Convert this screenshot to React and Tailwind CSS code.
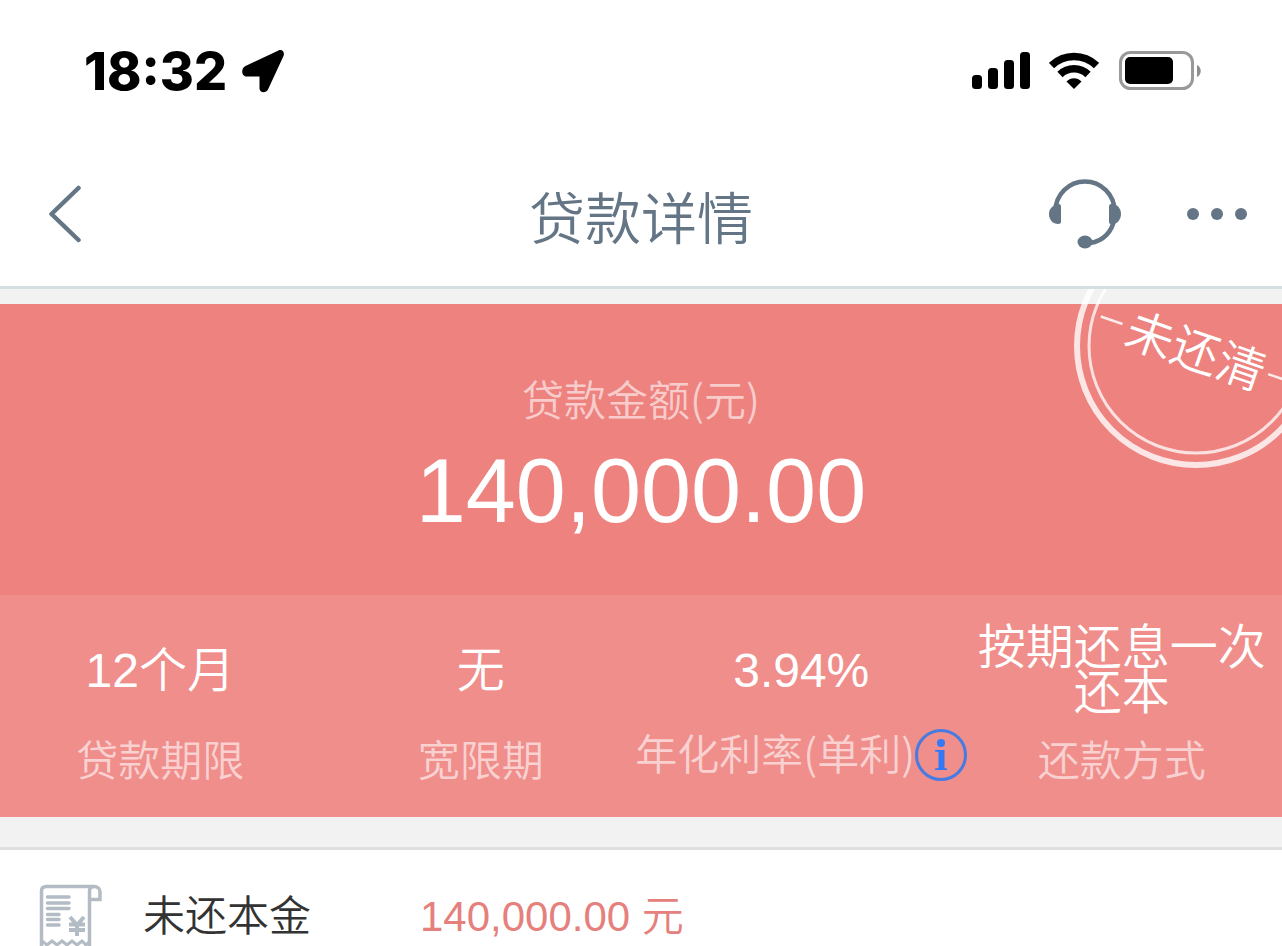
const terms = [
  { value: '12个月', label: '贷款期限' },
  { value: '无', label: '宽限期' },
  { value: '3.94%', label: '年化利率(单利)', info: true },
  { value: '按期还息一次还本', label: '还款方式' },
];

const StatusBar = () => (
  <div className="flex h-[142px] items-center justify-between pl-[84px] pr-[81px]">
    <div className="flex items-center gap-[14px] font-['Inter',sans-serif] text-[52px] font-extrabold leading-none text-black">
      <span className="pt-[2px]">18:32</span>
      <svg className="h-[44px] w-[44px]" viewBox="0 0 44 44" fill="currentColor" aria-hidden="true">
        <path d="M37.500 1.500C41 0 44 3 42.500 7L27 40.500C25 44.500 18.500 44 18.500 39.500V27.500H5.500C0.500 27.500 -0.500 19.500 4.500 17Z" />
      </svg>
    </div>
    <div className="flex items-center text-black">
      <svg className="h-[38px] w-[58px]" viewBox="0 0 58 38" fill="currentColor" aria-hidden="true">
        <rect x="0" y="23" width="10" height="14" rx="3.500" />
        <rect x="16" y="16" width="10" height="21" rx="3.500" />
        <rect x="32" y="8" width="10" height="29" rx="3.500" />
        <rect x="48" y="0" width="10" height="37" rx="3.500" />
      </svg>
      <svg className="ml-[19px] h-[38px] w-[50px]" viewBox="0 0 50 38" fill="none" aria-hidden="true">
        <path d="M2.500 13.500A32.500 32.500 0 0 1 47.500 13.500" stroke="currentColor" strokeWidth="7.500" />
        <path d="M11 22.500A20 20 0 0 1 39 22.500" stroke="currentColor" strokeWidth="7.500" />
        <path d="M17.500 29.500C21.500 25 28.500 25 32.500 29.500L25 37Z" fill="currentColor" />
      </svg>
      <svg className="ml-5 h-[40px] w-[82px]" viewBox="0 0 82 40" aria-hidden="true">
        <rect x="1.500" y="1.500" width="72" height="36" rx="10" fill="none" stroke="#999" strokeWidth="3" />
        <rect x="6" y="6" width="48" height="27" rx="5" fill="currentColor" />
        <path d="M78 14C83 16 83 24 78 26Z" fill="#8e8e8e" />
      </svg>
    </div>
  </div>
);

const NavBar = () => (
  <header className="grid h-[147px] grid-cols-[1fr_auto_1fr] items-center border-b-[3px] border-[#d5dfe1] px-[35px] text-[#647686]">
    <button type="button" aria-label="返回" className="ml-[13px] justify-self-start">
      <svg className="h-[58px] w-[34px]" viewBox="0 0 34 58" fill="none" stroke="currentColor" strokeWidth="4.500" strokeLinecap="round" strokeLinejoin="round">
        <path d="M30.500 3L3.500 29L30.500 55" />
      </svg>
    </button>
    <h1 className="pt-3 text-[56px] leading-[64px]">贷款详情</h1>
    <div className="flex items-center justify-self-end">
      <button type="button" aria-label="客服">
        <svg className="h-[72px] w-[74px]" viewBox="0 0 74 72" fill="none">
          <path d="M7.500 33A29.500 29.500 0 0 1 66.500 33" stroke="currentColor" strokeWidth="4.500" />
          <path d="M66 42C64 53 56 63 42 65" stroke="currentColor" strokeWidth="4.500" />
          <path d="M13 29C13 26 12 26 9 26C4 28 1 31 1 36C1 42 5 46 10 46C12 46 13 45 13 44Z" fill="currentColor" />
          <path d="M61 29C61 26 62 26 65 26C70 27 73 31 73 36C73 41 70 45 66 46H63C61.500 46 61 45 61 44Z" fill="currentColor" />
          <ellipse cx="37" cy="64" rx="7.500" ry="6.500" fill="currentColor" />
        </svg>
      </button>
      <button type="button" aria-label="更多" className="ml-[65px] flex gap-3">
        <span className="h-3 w-3 rounded-full bg-current" />
        <span className="h-3 w-3 rounded-full bg-current" />
        <span className="h-3 w-3 rounded-full bg-current" />
      </button>
    </div>
  </header>
);

const Stamp = () => (
  <svg className="absolute right-0 top-0 h-[182px] w-[210px]" viewBox="0 0 210 182" fill="none" role="img" aria-label="未还清">
    <circle cx="124" cy="57" r="119" stroke="#fff" strokeOpacity="0.8" strokeWidth="6" />
    <circle cx="124" cy="57" r="107" stroke="#fff" strokeOpacity="0.75" strokeWidth="3" />
    <g transform="rotate(19 123 61)">
      <path d="M23 60H46M200 60H226" stroke="#fff" strokeOpacity="0.85" strokeWidth="2.500" />
      <text x="124" y="79" textAnchor="middle" fontSize="48" fill="#fff">未还清</text>
    </g>
  </svg>
);

const TermItem = ({ value, label, info }) => (
  <div className="flex min-w-0 flex-col items-center">
    <dd className="order-1 flex h-[90px] items-center px-4 text-center text-[48px] leading-[45px] text-white">{value}</dd>
    <dt
      className={`order-2 flex whitespace-nowrap font-['Noto_Sans_CJK_SC',sans-serif] text-[42px] leading-[46px] text-white/60 ${info ? 'mt-[14px]' : 'mt-5'}`}
    >
      {label}
      {info && (
        <button
          type="button"
          aria-label="利率说明"
          className="flex h-[52px] w-[52px] shrink-0 items-center justify-center rounded-full border-[3px] border-[#477be0] text-[#3478f6]"
        >
          <svg className="h-[32px] w-[14px]" viewBox="0 0 14 32" fill="currentColor">
            <circle cx="7" cy="4" r="4" />
            <path d="M1 11H10.500V29L13 29.500V31H1V29.500L4.500 29V13L1 12.500Z" />
          </svg>
        </button>
      )}
    </dt>
  </div>
);

const ReceiptIcon = () => (
  <svg className="h-[62px] w-[64px] shrink-0" viewBox="0 0 64 62" fill="none" stroke="#b3bcc4" strokeWidth="3.500" aria-hidden="true">
    <path d="M2.500 62V7C2.500 4 4.500 2.500 7.500 2.500H55C59 2.500 61 5 61 8V15.500H51" />
    <path d="M50.500 62V7C50.500 4 52.500 2.500 55 2.500" />
    <path d="M8.500 13H30M8.500 19H30M8.500 24.500H30M8.500 30.500H20M8.500 35.500H20M8.500 41H20" strokeLinecap="round" />
    <path d="M31 33L38 41L45 33M38 41V52M30 40.500H46M30 46H46" strokeWidth="4" />
    <path d="M3 57L8 61L13 57L18 61L23 57L28 61L33 57L38 61L43 57L47 61L51 57" strokeWidth="3" />
  </svg>
);

const App = () => (
  <div className="bg-white font-['Liberation_Sans','Noto_Sans_CJK_SC',sans-serif] font-[350]">
    <StatusBar />
    <NavBar />
    <main className="relative overflow-hidden bg-[#f2f2f2] pt-[15px]">
      <section className="bg-[#ed827f] text-center">
        <div className="pb-[59px] pt-[72px]">
          <p className="font-['Noto_Sans_CJK_SC',sans-serif] text-[42px] leading-[44px] text-white/60">贷款金额(元)</p>
          <p className="mt-[26px] text-[90px] leading-[90px] text-white">140,000.00</p>
        </div>
        <dl className="grid grid-cols-4 bg-[#f08e8c] pb-[36px] pt-[30px]">
          {terms.map((term) => (
            <TermItem key={term.label} {...term} />
          ))}
        </dl>
      </section>
      <Stamp />
      <section className="mt-[30px] flex items-start border-t-[3px] border-[#dfdfdf] bg-white pl-[39px] pt-[34px] text-[42px] leading-[56px]">
        <ReceiptIcon />
        <div className="flex pl-10 pt-[5px]">
          <span className="w-[277px] text-[#333]">未还本金</span>
          <span className="text-[#e5807d]">140,000.00 元</span>
        </div>
      </section>
    </main>
  </div>
);

export default App;
